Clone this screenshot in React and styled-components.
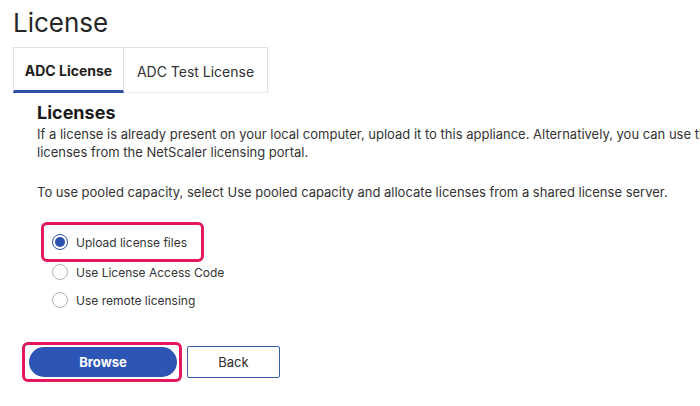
import React, { useState } from "react";
import styled, { createGlobalStyle } from "styled-components";

const GlobalStyle = createGlobalStyle`
  html, body {
    margin: 0;
    padding: 0;
    background: #ffffff;
    overflow: hidden;
  }
  body {
    font-family: Inter, "Liberation Sans", Arial, sans-serif;
    color: #2b2b2b;
  }
`;

const Page = styled.div`
  width: 700px;
  height: 406px;
  padding-left: 13px;
  box-sizing: border-box;
`;

const Title = styled.h1`
  margin: 7px 0 0 0;
  font-size: 26px;
  line-height: 32px;
  font-weight: 400;
  color: #262626;
`;

const Tabs = styled.div`
  display: flex;
  margin-top: 8px;
  width: 255px;
`;

const Tab = styled.button`
  display: flex;
  align-items: center;
  justify-content: center;
  height: 46px;
  padding: 3px 0 0 0;
  box-sizing: border-box;
  width: ${(p) => p.$width}px;
  background: #fff;
  font-family: inherit;
  font-size: 14px;
  font-weight: ${(p) => (p.$active ? 700 : 400)};
  color: ${(p) => (p.$active ? "#1e1e1e" : "#333")};
  border: 1px solid #e1e1e1;
  border-left-width: ${(p) => (p.$first ? 1 : 0)}px;
  border-bottom: ${(p) => (p.$active ? "3px solid #2c4fa3" : "1px solid #ececec")};
  cursor: pointer;
`;

const Content = styled.div`
  padding-left: 24px;
`;

const Heading = styled.h2`
  margin: 8px 0 0 0;
  font-size: 18px;
  line-height: 24px;
  font-weight: 700;
  color: #1b1b1b;
`;

const Para = styled.p`
  margin: ${(p) => p.$gap}px 0 0 0;
  font-size: 13px;
  line-height: 18px;
  color: #333;
  white-space: nowrap;
`;

const Options = styled.div`
  display: flex;
  flex-direction: column;
  align-items: flex-start;
  margin: 21px 0 0 4px;
`;

const Highlight = styled.div`
  display: flex;
  align-items: center;
  border: 3px solid #e3185f;
  border-radius: 6px;
  box-sizing: border-box;
  padding: ${(p) => p.$pad};
`;

const OptionRow = styled.label`
  display: flex;
  align-items: center;
  gap: 8px;
  height: ${(p) => (p.$boxed ? 34 : 20)}px;
  padding-left: ${(p) => (p.$boxed ? 0 : 11)}px;
  margin-top: ${(p) => p.$gap || 0}px;
  font-size: 12px;
  color: #333;
  cursor: pointer;
`;

const Radio = styled.span`
  width: 16px;
  height: 16px;
  flex: none;
  box-sizing: border-box;
  border-radius: 50%;
  border: 1px solid ${(p) => (p.$checked ? "#2c50b0" : "#b4b4b4")};
  display: flex;
  align-items: center;
  justify-content: center;
  background: #fff;

  &::after {
    content: "";
    width: 10px;
    height: 10px;
    border-radius: 50%;
    background: ${(p) => (p.$checked ? "#2c50b0" : "transparent")};
  }
`;

const Actions = styled.div`
  display: flex;
  align-items: center;
  gap: 5px;
  margin: 32px 0 0 -15px;
`;

const PrimaryButton = styled.button`
  width: 148px;
  height: 30px;
  border: none;
  border-radius: 15px;
  background: #2c55b5;
  color: #fff;
  font-family: inherit;
  font-size: 13px;
  font-weight: 700;
  cursor: pointer;
`;

const SecondaryButton = styled.button`
  width: 93px;
  height: 32px;
  border: 1px solid #3a5da8;
  border-radius: 2px;
  background: #fff;
  color: #2b2b2b;
  font-family: inherit;
  font-size: 13px;
  cursor: pointer;
`;

const options = [
  { id: "upload", label: "Upload license files" },
  { id: "code", label: "Use License Access Code" },
  { id: "remote", label: "Use remote licensing" },
];

export default function App() {
  const [tab, setTab] = useState("adc");
  const [choice, setChoice] = useState("upload");

  return (
    <Page>
      <GlobalStyle />
      <Title>License</Title>
      <Tabs>
        <Tab $first $width={111} $active={tab === "adc"} onClick={() => setTab("adc")}>
          ADC License
        </Tab>
        <Tab $width={144} $active={tab === "test"} onClick={() => setTab("test")}>
          ADC Test License
        </Tab>
      </Tabs>
      <Content>
        <Heading>Licenses</Heading>
        <Para $gap={0}>
          If a license is already present on your local computer, upload it to this appliance. Alternatively, you can use the
          <br />
          licenses from the NetScaler licensing portal.
        </Para>
        <Para $gap={22}>
          To use pooled capacity, select Use pooled capacity and allocate licenses from a shared license server.
        </Para>
        <Options>
          <Highlight $pad="0 14px 0 8px">
            <OptionRow $boxed onClick={() => setChoice(options[0].id)}>
              <Radio $checked={choice === options[0].id} />
              {options[0].label}
            </OptionRow>
          </Highlight>
          <OptionRow onClick={() => setChoice(options[1].id)}>
            <Radio $checked={choice === options[1].id} />
            {options[1].label}
          </OptionRow>
          <OptionRow $gap={8} onClick={() => setChoice(options[2].id)}>
            <Radio $checked={choice === options[2].id} />
            {options[2].label}
          </OptionRow>
        </Options>
        <Actions>
          <Highlight $pad="2px 2px 2px 4px">
            <PrimaryButton>Browse</PrimaryButton>
          </Highlight>
          <SecondaryButton>Back</SecondaryButton>
        </Actions>
      </Content>
    </Page>
  );
}
